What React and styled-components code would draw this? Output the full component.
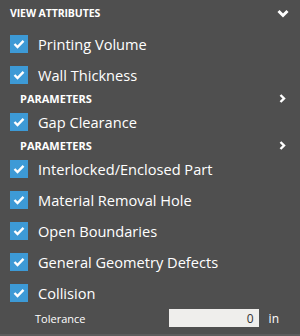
import React from 'react'
import styled, { createGlobalStyle } from 'styled-components'

const GlobalStyle = createGlobalStyle`
    html, body {
        margin: 0;
        padding: 0;
        background: #4f4f4f;
    }
    body {
        font-family: 'Open Sans', 'Noto Sans', sans-serif;
    }
`

const attributes = [
    { label: 'Printing Volume' },
    { label: 'Wall Thickness', params: true },
    { label: 'Gap Clearance', params: true },
    { label: 'Interlocked/Enclosed Part' },
    { label: 'Material Removal Hole' },
    { label: 'Open Boundaries' },
    { label: 'General Geometry Defects' },
    { label: 'Collision' },
]

const ChevronDown = () => (
    <svg width="12" height="9" viewBox="0 0 12 9">
        <path d="M1.5 2 L6 6.5 L10.5 2" fill="none" stroke="#fff" strokeWidth="3" />
    </svg>
)

const ChevronRight = () => (
    <svg width="7" height="9" viewBox="0 0 7 9">
        <path d="M1.5 1 L5 4.5 L1.5 8" fill="none" stroke="#fff" strokeWidth="2.4" />
    </svg>
)

const Check = () => (
    <svg width="12" height="10" viewBox="0 0 12 10">
        <path d="M1.5 5 L4.5 8 L10.5 1.8" fill="none" stroke="#fff" strokeWidth="2.4" />
    </svg>
)

const App = () => {
    return (
        <Panel>
            <GlobalStyle />
            <Header>
                <span>View Attributes</span>
                <ChevronDown />
            </Header>
            {attributes.map((a) => (
                <React.Fragment key={a.label}>
                    <Row>
                        <Box><Check /></Box>
                        <Label>{a.label}</Label>
                    </Row>
                    {a.params && (
                        <Params>
                            <span>Parameters</span>
                            <ChevronRight />
                        </Params>
                    )}
                </React.Fragment>
            ))}
            <Tolerance>
                <span>Tolerance</span>
                <Input value="0" readOnly />
                <Unit>in</Unit>
            </Tolerance>
        </Panel>
    )
}

const Panel = styled.div`
    width: 300px;
    height: 336px;
    box-sizing: border-box;
    background: #4f4f4f;
    border-bottom: 2px solid #5c5c5c;
    color: #fff;
    overflow: hidden;
`

const Header = styled.div`
    height: 28px;
    box-sizing: border-box;
    padding: 3px 11px 0 10px;
    display: flex;
    align-items: center;
    justify-content: space-between;
    span {
        font-size: 10.5px;
        font-weight: 700;
        text-transform: uppercase;
        letter-spacing: -0.1px;
        margin-top: -6px;
    }
    svg {
        margin-top: -4px;
    }
`

const Row = styled.div`
    height: 31px;
    box-sizing: border-box;
    padding: 7px 0 0 10px;
    display: flex;
    align-items: flex-start;
`

const Box = styled.div`
    width: 18px;
    height: 18px;
    background: #3d9ad6;
    display: flex;
    align-items: center;
    justify-content: center;
    flex-shrink: 0;
`

const Label = styled.span`
    margin-left: 10px;
    font-size: 14.6px;
    line-height: 18px;
    color: #fff;
`

const Params = styled.div`
    height: 16px;
    display: flex;
    align-items: center;
    justify-content: space-between;
    padding: 0 14px 0 20px;
    span {
        font-size: 11px;
        font-weight: 700;
        text-transform: uppercase;
        letter-spacing: 0;
    }
`

const Tolerance = styled.div`
    display: flex;
    align-items: center;
    padding: 1px 0 0 35px;
    span {
        font-size: 11px;
        color: #fff;
    }
`

const Input = styled.input`
    margin-left: auto;
    width: 90px;
    height: 18px;
    box-sizing: border-box;
    border: none;
    outline: none;
    background: #efeeec;
    text-align: right;
    padding: 0 5px;
    font-family: 'Open Sans', sans-serif;
    font-size: 12px;
    color: #333;
`

const Unit = styled.em`
    font-style: normal;
    font-size: 12px;
    color: #fff;
    margin: 0 21px 0 10px;
`

export default App
